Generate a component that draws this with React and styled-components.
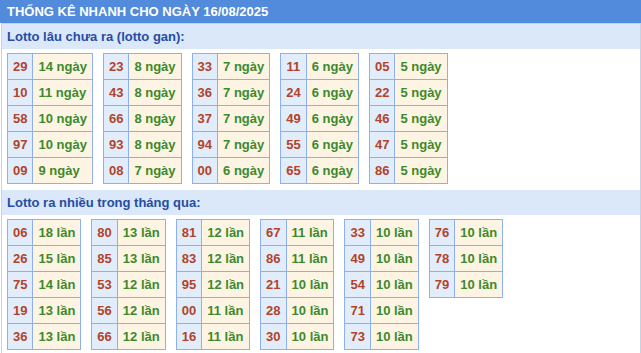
import React from 'react';
import styled, { createGlobalStyle } from 'styled-components';

const GlobalStyle = createGlobalStyle`
  html, body {
    margin: 0;
    padding: 0;
    background: #ffffff;
    font-family: "Liberation Sans", Arial, sans-serif;
  }
`;

const Wrapper = styled.div`
  width: 641px;
  box-sizing: border-box;
`;

const Header = styled.div`
  height: 23px;
  line-height: 23px;
  background: #528bdb;
  color: #ffffff;
  font-size: 13px;
  font-weight: 700;
  padding-left: 7px;
  white-space: nowrap;
`;

const Box = styled.div`
  margin-left: 1px;
  border: 1px solid #c5d3e4;
  border-bottom: none;
`;

const SubHeader = styled.div`
  height: 25px;
  line-height: 25px;
  background: #dae8fa;
  color: #264da3;
  font-size: 13px;
  font-weight: 700;
  padding-left: 5px;
`;

const TableRow = styled.div`
  display: flex;
  align-items: flex-start;
  gap: 10px;
  padding: 4px 5px 6px;
`;

const Table = styled.table`
  border-collapse: collapse;
  font-size: 13px;
  font-weight: 700;
`;

const NumCell = styled.td`
  border: 1px solid #8eaff0;
  background: #e2edfb;
  color: #b24329;
  height: 25px;
  line-height: 25px;
  padding: 0 5px;
  box-sizing: border-box;
  text-align: center;
  white-space: nowrap;
`;

const ValueCell = styled(NumCell)`
  background: #fdf4e4;
  color: #3c8a2c;
  text-align: left;
`;

const ganTables = [
  [['29', 14], ['10', 11], ['58', 10], ['97', 10], ['09', 9]],
  [['23', 8], ['43', 8], ['66', 8], ['93', 8], ['08', 7]],
  [['33', 7], ['36', 7], ['37', 7], ['94', 7], ['00', 6]],
  [['11', 6], ['24', 6], ['49', 6], ['55', 6], ['65', 6]],
  [['05', 5], ['22', 5], ['46', 5], ['47', 5], ['86', 5]],
];

const hotTables = [
  [['06', 18], ['26', 15], ['75', 14], ['19', 13], ['36', 13]],
  [['80', 13], ['85', 13], ['53', 12], ['56', 12], ['66', 12]],
  [['81', 12], ['83', 12], ['95', 12], ['00', 11], ['16', 11]],
  [['67', 11], ['86', 11], ['21', 10], ['28', 10], ['30', 10]],
  [['33', 10], ['49', 10], ['54', 10], ['71', 10], ['73', 10]],
  [['76', 10], ['78', 10], ['79', 10]],
];

const StatTable = ({ rows, unit }) => (
  <Table>
    <tbody>
      {rows.map(([num, count]) => (
        <tr key={num}>
          <NumCell>{num}</NumCell>
          <ValueCell>{count} {unit}</ValueCell>
        </tr>
      ))}
    </tbody>
  </Table>
);

const App = () => (
  <Wrapper>
    <GlobalStyle />
    <Header>THỐNG KÊ NHANH CHO NGÀY 16/08/2025</Header>
    <Box>
      <SubHeader>Lotto lâu chưa ra (lotto gan):</SubHeader>
      <TableRow>
        {ganTables.map((rows, i) => (
          <StatTable key={i} rows={rows} unit="ngày" />
        ))}
      </TableRow>
      <SubHeader>Lotto ra nhiều trong tháng qua:</SubHeader>
      <TableRow>
        {hotTables.map((rows, i) => (
          <StatTable key={i} rows={rows} unit="lần" />
        ))}
      </TableRow>
    </Box>
  </Wrapper>
);

export default App;
